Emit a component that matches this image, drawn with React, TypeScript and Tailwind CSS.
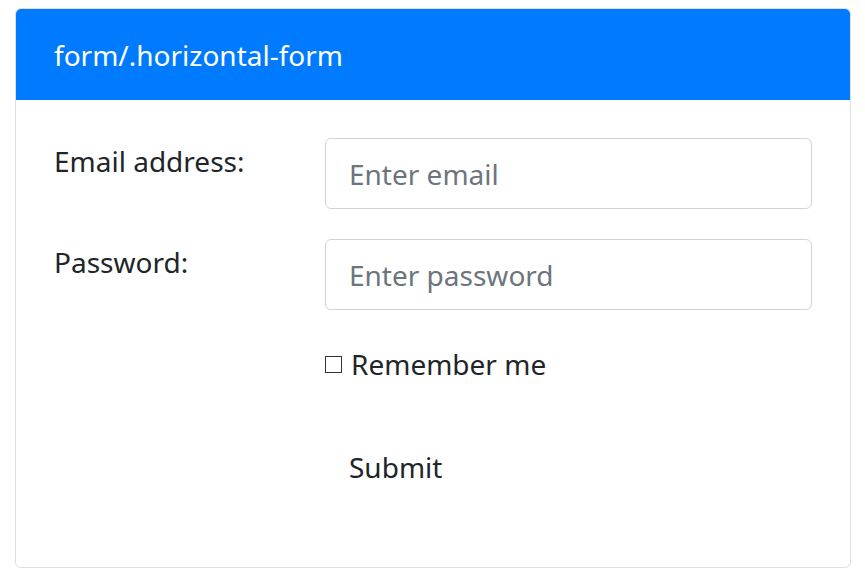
import React from "react";

export default function App() {
  return (
    <div className="w-[865px] h-[579px] bg-white pt-[8px] pl-[15px] pr-[14px]" style={{ fontFamily: '"Noto Sans", "Open Sans", sans-serif' }}>
      <div className="h-[560px] border border-[#dfdfdf] rounded-[6px] overflow-hidden">
        <div className="h-[91px] bg-[#007bff] text-white text-[28px] leading-[42px] pl-[38px] flex items-center">
          form/.horizontal-form
        </div>
        <div className="pl-[38px] pr-[38px] pt-[38px] text-[#212529] text-[28px] leading-[42px]">
          <div className="grid grid-cols-[271px_1fr]">
            <label className="pt-[2px]">Email address:</label>
            <div className="h-[71px] border border-[#ced4da] rounded-[6px] px-[23px] flex items-center text-[#6c757d]">Enter email</div>
          </div>
          <div className="grid grid-cols-[271px_1fr] mt-[30px]">
            <label className="pt-[2px]">Password:</label>
            <div className="h-[71px] border border-[#ced4da] rounded-[6px] px-[23px] flex items-center text-[#6c757d]">Enter password</div>
          </div>
          <div className="grid grid-cols-[271px_1fr] mt-[33px]">
            <div />
            <div className="flex items-center">
              <span className="w-[17px] h-[17px] border-[1.5px] border-[#333] mr-[9px]" />
              <span>Remember me</span>
            </div>
          </div>
          <div className="grid grid-cols-[271px_1fr] mt-[61px]">
            <div />
            <div className="pl-[24px]">Submit</div>
          </div>
        </div>
      </div>
    </div>
  );
}
